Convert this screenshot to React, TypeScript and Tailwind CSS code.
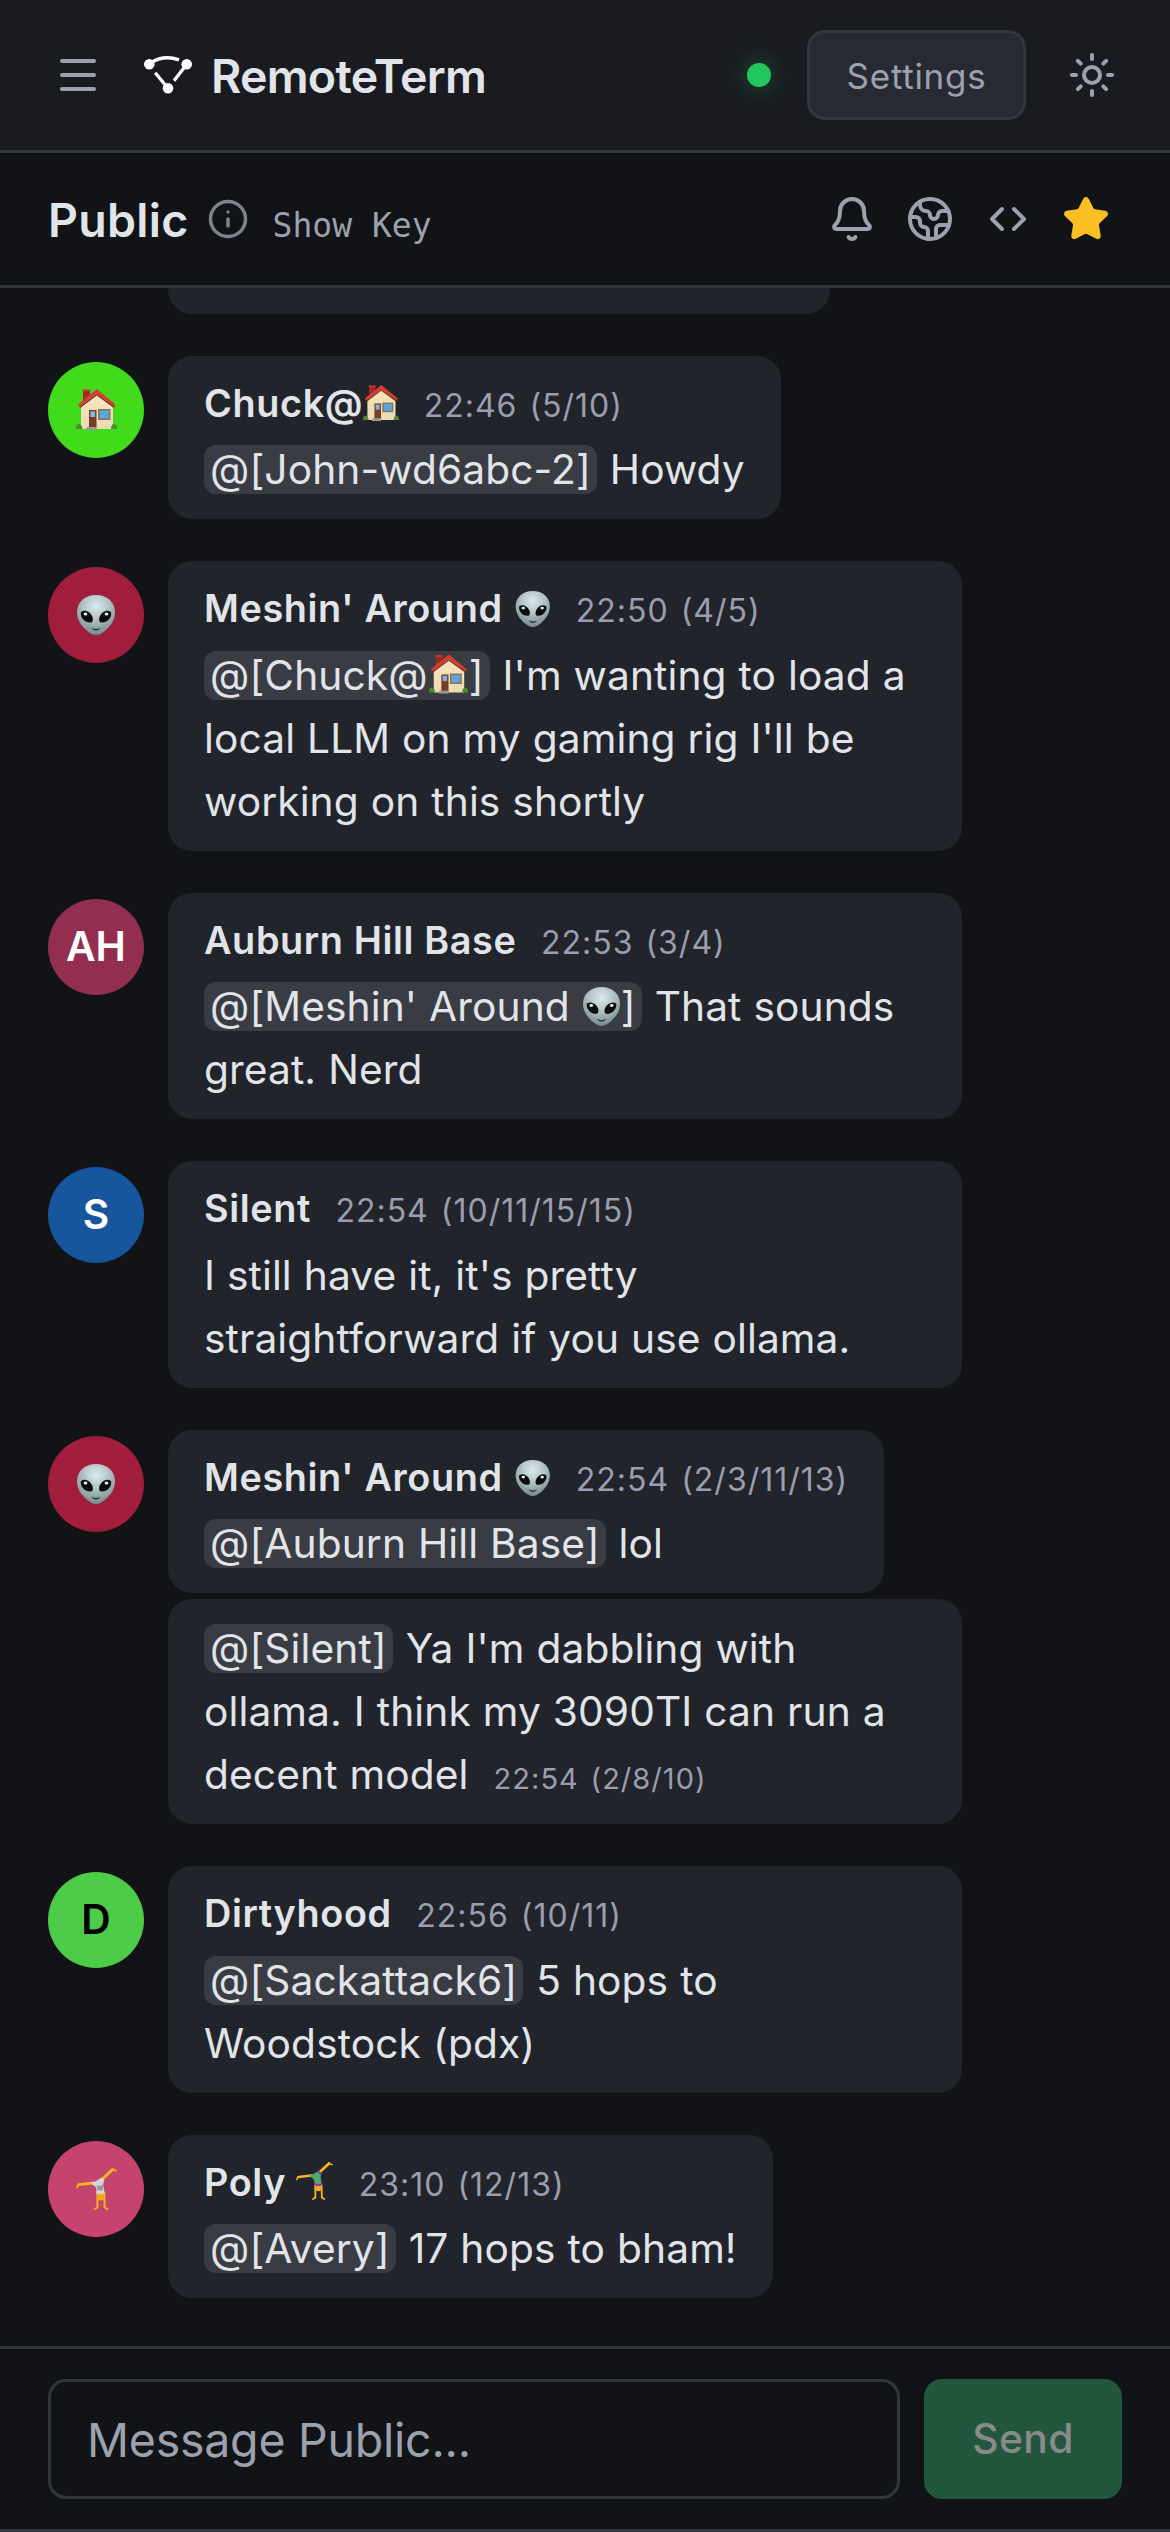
import type { ReactNode } from "react";
import { Bell, ChevronsLeftRight, Earth, Info, Menu, Star, Sun } from "lucide-react";

function House({ className }: { className: string }) {
  return (
    <svg viewBox="0 0 41 41" className={className} role="img" aria-label="🏠">
      <defs>
        <linearGradient id="wall" x1="0" y1="0" x2="0" y2="1">
          <stop offset="0" stopColor="#fbe6bd" />
          <stop offset="1" stopColor="#eadab4" />
        </linearGradient>
      </defs>
      <path d="M7 1h7v8l-7 6z" fill="#9c2a20" />
      <path d="M6.5 0.5h8v2h-8z" fill="#b8402f" />
      <path d="M5 17 21 3 37 18v22H5z" fill="url(#wall)" />
      <path d="M20.8 0 39.5 15.5 38.5 18 20.8 5 3.5 18 2 15.5z" fill="#d93c2d" />
      <path d="M20.8 5 38.5 18l-.6 1L20.8 6.6 4.2 19l-.7-1z" fill="#6f2a20" />
      <rect x="13" y="21" width="7.5" height="18" fill="#7a3d28" />
      <rect x="14.4" y="22.4" width="4.6" height="5.6" fill="#79b9e6" />
      <rect x="22" y="20" width="12.5" height="11" fill="#8b7355" />
      <rect x="23.6" y="21.6" width="9.3" height="7.8" fill="#5aa7e0" />
      <path d="M0 40c-.4-3 1-5 3-5s3 2 3.500 5zM35 40c0-3 1-5 3-5s3.400 2 3 5z" fill="#4f8a2c" />
      <path d="M11 38h9.500v3H10z" fill="#9d9a94" />
    </svg>
  );
}

function Alien({ className }: { className: string }) {
  return (
    <svg viewBox="0 0 38 40" className={className} role="img" aria-label="👽">
      <defs>
        <radialGradient id="skin" cx="0.5" cy="0.28" r="0.72">
          <stop offset="0" stopColor="#dbeaec" />
          <stop offset="0.45" stopColor="#b4c5c7" />
          <stop offset="1" stopColor="#788a8c" />
        </radialGradient>
      </defs>
      <path d="M19 0C30 0 38 7 38 17c0 8-4 13-9 18-3.500 3-6.500 5-10 5s-6.500-2-10-5C4 30 0 25 0 17 0 7 8 0 19 0z" fill="url(#skin)" />
      <path d="M4 17c4-3 9 0 11 4 1.500 3 1 6-1 6.500C8 28.500 2.500 22 4 17z" fill="#0b0d0e" />
      <path d="M34 17c-4-3-9 0-11 4-1.500 3-1 6 1 6.500 6 1 11.500-5.500 10-10.500z" fill="#0b0d0e" />
      <ellipse cx="8.500" cy="19" rx="1.900" ry="1.500" fill="#e8eeee" />
      <ellipse cx="29.500" cy="19" rx="1.900" ry="1.500" fill="#e8eeee" />
      <path d="M14.500 32.500c3 2 6 2 9 0-1.500 4-7.500 4-9 0z" fill="#262e30" />
    </svg>
  );
}

function Cartwheel({ className, female }: { className: string; female?: boolean }) {
  return (
    <svg viewBox="0 0 41 42" className={className} role="img" aria-label="🤸">
      <g fill="none" stroke="#f4b51e" strokeLinecap="round" strokeLinejoin="round">
        <path d="M1 19.300 2.200 16.500" strokeWidth="1.800" />
        <path d="M3 16.600 17 15" strokeWidth="2.800" />
        <path d="M27 10.500 36.500 1.500" strokeWidth="3" />
        <path d="M36.500 1.300 40 2.800" strokeWidth="1.600" />
        <path d="M21.300 25 21.500 39.500 18.800 41" strokeWidth="2" />
        <path d="M28.300 25 28.700 39.500 31.300 41" strokeWidth="2" />
      </g>
      <circle cx="24.700" cy="28.500" r="3.900" fill="#f2a918" />
      <path
        d="M15 14.800C20 13.800 23 11 26 9.500l2.500 3c-1.800 2.500-1.300 6 .5 12.500-2.500 1.500-6.500 1.500-9 0 1-4 .5-6-3-8z"
        className={female ? "fill-[#4fa86c]" : "fill-[#d3d5d9]"}
      />
      {female ? (
        <path d="M20 23c2.500 2 6.500 2 8.800 0l.4 2.500c-3 1.500-6.500 1.500-9.400 0zM25.500 10l3 2.700-1.300 1.500-2.700-3z" fill="#a122c4" />
      ) : (
        <path d="M20.500 17c2 1.500 4.500 1 6.500-1v6c-2 1-4 1-5.500.3z" fill="#9a9da3" />
      )}
    </svg>
  );
}

function Logo() {
  return (
    <svg viewBox="0 0 48 48" className="size-12 shrink-0 text-white" fill="none" stroke="currentColor" strokeWidth="3.300">
      <path d="M6.500 11.900Q20 3.400 35 8.900M11.200 21.700 24 37.300M42.700 13.300 30 29.700" />
      <g fill="currentColor" stroke="none">
        <circle cx="5.300" cy="13.300" r="5.300" />
        <circle cx="42.700" cy="13.300" r="5.300" />
        <circle cx="24" cy="37.300" r="5.300" />
      </g>
    </svg>
  );
}

function Mention({ children }: { children: ReactNode }) {
  return <span className="mr-[1px] rounded-[12px] bg-[#3a3c43] px-[6px]">{children}</span>;
}

function Stamp({ time, hops, small }: { time: string; hops: string; small?: boolean }) {
  return (
    <span
      className={
        small
          ? "ml-[25px] text-[29px] leading-[30px] tracking-[1.05px] text-[#9a9ead]"
          : "ml-[24.5px] text-[32px] leading-[32px] font-normal tracking-[1px] text-[#9a9ead]"
      }
    >
      {time} <span className="ml-[2px]">({hops})</span>
    </span>
  );
}

function Bubble({ name, time, hops, children }: { name?: ReactNode; time?: string; hops?: string; children: ReactNode }) {
  return (
    <div className="max-w-[793.5px] rounded-[24px] bg-[#21242b] px-[36px] py-[18px]">
      {name && (
        <div className="mb-[6px] h-[58.5px] whitespace-nowrap text-[37.8px] leading-[58.5px] font-semibold tracking-[0.62px]">
          {name}
          <Stamp time={time!} hops={hops!} />
        </div>
      )}
      <div className="text-[40.7px] leading-[63px] tracking-[0.1px] [word-spacing:0.4px]">{children}</div>
    </div>
  );
}

function Group({ avatar, color, children }: { avatar: ReactNode; color: string; children: ReactNode }) {
  return (
    <div className="flex items-start gap-[24px]">
      <div className={`mt-[6px] flex size-24 shrink-0 items-center justify-center rounded-full text-[40.7px] font-semibold ${color}`}>
        {avatar}
      </div>
      <div className="flex flex-col items-start gap-[6px]">{children}</div>
    </div>
  );
}

const nameHouse = "inline-block h-[36px] w-[36px] align-[-4px]";
const nameAlien = "ml-[2px] mr-[1px] inline-block h-[36px] w-[35.5px] align-[-5px]";
const textHouse = "mx-[1px] inline-block h-[40px] w-[39px] align-[-4.5px]";
const textAlien = "mx-[1px] inline-block h-[39px] w-[37px] align-[-4.5px]";

export default function App() {
  return (
    <div className="flex h-[2532px] w-[1170px] flex-col overflow-hidden bg-[#111316] font-['Inter',sans-serif] text-[#e1e4e9]">
      <header className="flex h-[153px] shrink-0 items-center border-b-[3px] border-[#32373f] bg-[#1a1b20] px-[54px]">
        <Menu className="size-12 text-[#9ca1ae]" strokeWidth={2} />
        <div className="ml-[42px] flex items-center gap-[19px]">
          <Logo />
          <h1 className="pt-[2px] text-[46.5px] leading-[60px] font-semibold tracking-[-0.75px]">RemoteTerm</h1>
        </div>
        <div className="ml-auto flex items-center">
          <span className="size-6 rounded-full bg-[#22c55e] shadow-[0_0_24px_rgba(34,197,94,0.4)]" />
          <button className="ml-[36px] flex h-[90px] w-[219px] items-center justify-center rounded-[18px] border-[3px] border-[#32373f] bg-[#272a32] pt-[2px] text-[35px] tracking-[0.72px] text-[#9ca1ae]">
            Settings
          </button>
          <Sun className="ml-[42px] size-12 text-[#9ca1ae]" strokeWidth={2} />
        </div>
      </header>

      <div className="flex h-[135px] shrink-0 items-center border-b-[3px] border-[#32373f] pr-[60px] pl-[48px]">
        <h2 className="pt-[2px] text-[46.5px] leading-[60px] font-semibold tracking-[0.28px]">Public</h2>
        <Info className="ml-[18px] size-[42px] text-[#7f838d]" strokeWidth={2} />
        <span className="ml-[24px] pt-[14px] font-['DejaVu_Sans_Mono',monospace] text-[33px] leading-[48px] text-[#9ca1ae]">
          Show Key
        </span>
        <div className="ml-auto flex items-center gap-[30px] text-[#9ca1ae]">
          <Bell className="size-12" />
          <Earth className="size-12" />
          <ChevronsLeftRight className="size-12" />
          <Star className="size-12 fill-[#fbbf24] text-[#fbbf24]" />
        </div>
      </div>

      <main className="flex min-h-0 flex-1 flex-col justify-end gap-[42px] overflow-hidden px-[48px] pb-[48px]">
        <div className="ml-[120px] h-[80px] w-[662px] shrink-0 rounded-[24px] bg-[#21242b]" />

        <Group color="bg-[#42db1c]" avatar={<House className="size-[41px]" />}>
          <Bubble name={<>Chuck@<House className={nameHouse} /></>} time="22:46" hops="5/10">
            <Mention>@[John-wd6abc-2]</Mention> Howdy
          </Bubble>
        </Group>

        <Group color="bg-[#a11d3c]" avatar={<Alien className="h-[40px] w-[38px]" />}>
          <Bubble name={<>Meshin' Around <Alien className={nameAlien} /></>} time="22:50" hops="4/5">
            <Mention>@[Chuck@<House className={textHouse} />]</Mention> I'm wanting to load a local LLM on my gaming rig I'll be working on this shortly
          </Bubble>
        </Group>

        <Group color="bg-[#932e4f] text-white" avatar="AH">
          <Bubble name="Auburn Hill Base" time="22:53" hops="3/4">
            <Mention>@[Meshin' Around <Alien className={textAlien} />]</Mention> That sounds great. Nerd
          </Bubble>
        </Group>

        <Group color="bg-[#17569c] text-white" avatar="S">
          <Bubble name="Silent" time="22:54" hops="10/11/15/15">
            I still have it, it's pretty straightforward if you use ollama.
          </Bubble>
        </Group>

        <Group color="bg-[#a11d3c]" avatar={<Alien className="h-[40px] w-[38px]" />}>
          <Bubble name={<>Meshin' Around <Alien className={nameAlien} /></>} time="22:54" hops="2/3/11/13">
            <Mention>@[Auburn Hill Base]</Mention> lol
          </Bubble>
          <Bubble>
            <Mention>@[Silent]</Mention> Ya I'm dabbling with ollama. I think my 3090TI can run a decent model
            <Stamp time="22:54" hops="2/8/10" small />
          </Bubble>
        </Group>

        <Group color="bg-[#4dcc4a] text-black" avatar="D">
          <Bubble name="Dirtyhood" time="22:56" hops="10/11">
            <Mention>@[Sackattack6]</Mention> 5 hops to Woodstock (pdx)
          </Bubble>
        </Group>

        <Group color="bg-[#c4446d]" avatar={<Cartwheel className="h-[42px] w-[41px]" />}>
          <Bubble name={<>Poly <Cartwheel female className="mr-[1px] inline-block h-[38px] w-[37px] align-[-4px]" /></>} time="23:10" hops="12/13">
            <Mention>@[Avery]</Mention> 17 hops to bham!
          </Bubble>
        </Group>
      </main>

      <footer className="flex h-[186px] shrink-0 items-center gap-[24px] border-y-[3px] border-[#32373f] px-[48px]">
        <input
          className="h-[120px] w-[852px] rounded-[18px] border-[3px] border-[#32373f] bg-transparent px-[36px] pt-[2px] text-[46.5px] tracking-[-0.24px] placeholder:text-[#9ca1ae]"
          placeholder="Message Public..."
        />
        <button className="h-[120px] flex-1 rounded-[18px] bg-[#22573d] text-[40.7px] font-medium tracking-[0.4px] text-[#898b89]">
          Send
        </button>
      </footer>
    </div>
  );
}
